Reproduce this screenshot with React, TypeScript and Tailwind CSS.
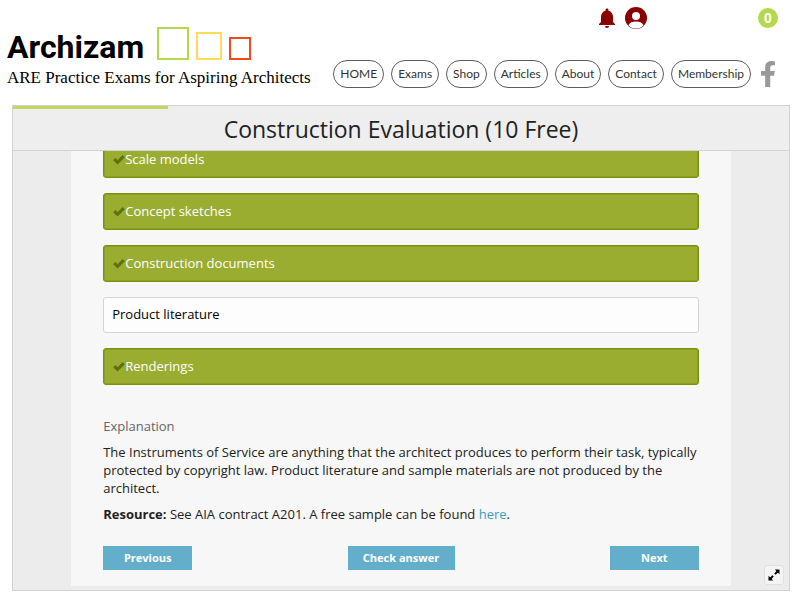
import { useState } from 'react'
import { FaFacebookF } from 'react-icons/fa'
import { MdNotifications } from 'react-icons/md'

type Option = {
  id: string
  label: string
}

const navItems = ['HOME', 'Exams', 'Shop', 'Articles', 'About', 'Contact', 'Membership']

const options: Option[] = [
  { id: 'models', label: 'Scale models' },
  { id: 'sketches', label: 'Concept sketches' },
  { id: 'documents', label: 'Construction documents' },
  { id: 'literature', label: 'Product literature' },
  { id: 'renderings', label: 'Renderings' },
]

const actionCls = 'h-6 bg-[#63afcb] text-[11px] font-bold text-white hover:bg-[#529fbb]'

function LogoSquares() {
  return (
    <svg width="94" height="34" viewBox="0 0 94 34" fill="none" strokeWidth="2" aria-hidden>
      <rect x="1" y="1" width="30" height="31" stroke="#b5d94c" />
      <rect x="40" y="6" width="24" height="26" stroke="#ffdb58" />
      <rect x="73" y="11" width="20" height="21" stroke="#ee4a1c" />
    </svg>
  )
}

function AccountIcon() {
  return (
    <svg width="22" height="22" viewBox="0 0 22 22" aria-hidden>
      <circle cx="11" cy="11" r="11" fill="#8b0000" />
      <circle cx="11" cy="9" r="4" fill="#fff" />
      <path d="M3.4 18.2C4.6 15.6 7.6 14.6 11 14.6s6.4 1 7.6 3.6a10.3 10.3 0 0 1-15.2 0z" fill="#fff" />
    </svg>
  )
}

function CheckIcon() {
  return (
    <svg width="12" height="10" viewBox="0 0 12 10" className="shrink-0" aria-hidden>
      <path d="M1.2 4.1L4.5 7.3L10.8 1.1" fill="none" stroke="#5f7208" strokeWidth="3" />
    </svg>
  )
}

function ExpandIcon() {
  return (
    <svg width="12" height="12" viewBox="0 0 12 12" aria-hidden>
      <path d="M6.8 0.5H11.5V5.2zM0.5 6.8V11.5H5.2z" fill="#000" />
      <path d="M9.5 2.5L6.9 5.1M5.1 6.9L2.5 9.5" stroke="#000" strokeWidth="2" />
    </svg>
  )
}

function OptionRow({ option, checked, onToggle }: { option: Option; checked: boolean; onToggle: () => void }) {
  return (
    <label
      className={
        checked
          ? 'flex h-[37px] cursor-pointer items-center rounded-[3px] border border-[#799209] bg-[#9aad31] px-[9px] text-white shadow-[inset_0_0_0_1px_#8a9f1d]'
          : 'flex h-9 cursor-pointer items-center rounded-[3px] border border-[#d4d4d4] bg-[#fdfdfd] px-2 text-black'
      }
    >
      <input type="checkbox" className="sr-only" checked={checked} onChange={onToggle} />
      {checked && <CheckIcon />}
      {option.label}
    </label>
  )
}

function Header() {
  return (
    <header className="flex items-start justify-between pr-[22px] pl-[7px]">
      <div className="pt-[27px] whitespace-nowrap text-black">
        <div className="flex items-start gap-[13px]">
          <span className="font-['Roboto',sans-serif] text-[32px] leading-10 font-bold">Archizam</span>
          <LogoSquares />
        </div>
        <p className="font-['Liberation_Serif',serif] text-[17px] leading-[22px]">
          ARE Practice Exams for Aspiring Architects
        </p>
      </div>
      <div className="flex flex-col gap-[30px] pt-1.5">
        <div className="flex items-center justify-end">
          <button type="button" aria-label="Notifications" className="mr-1.5 text-[#8b0000]">
            <MdNotifications size={24} />
          </button>
          <button type="button" aria-label="Account" className="mr-[111px]">
            <AccountIcon />
          </button>
          <a
            href="#cart"
            className="flex size-5 items-center justify-center rounded-full bg-[#b5d94c] font-['Liberation_Sans',sans-serif] text-[14px] font-bold text-white"
          >
            0
          </a>
        </div>
        <div className="flex items-center">
          <nav className="flex gap-[7px] font-['Lato',sans-serif] text-[12px] text-[#333]">
            {navItems.map((item) => (
              <a
                key={item}
                href={`#${item.toLowerCase()}`}
                className="flex h-7 items-center rounded-full border border-[#5c5c5c] px-1.5 whitespace-nowrap"
              >
                {item}
              </a>
            ))}
          </nav>
          <a href="#facebook" aria-label="Facebook" className="mr-[-3px] ml-1 text-[#999]">
            <FaFacebookF size={26} />
          </a>
        </div>
      </div>
    </header>
  )
}

export default function App() {
  const [selected, setSelected] = useState(['models', 'sketches', 'documents', 'renderings'])

  const toggle = (id: string) =>
    setSelected((prev) => (prev.includes(id) ? prev.filter((s) => s !== id) : [...prev, id]))

  return (
    <div className="bg-white font-['Open_Sans',sans-serif] text-[13px] text-[#222]">
      <Header />
      <main className="relative mt-4 mr-[10px] ml-3 border border-[#d2d2d2] bg-[#ececec]">
        <div className="border-b border-[#d2d2d2] bg-[#eee]">
          <div className="h-[3px] w-1/5 bg-[#c0d860]" />
          <h1 className="text-center text-[23px] leading-[41px]">Construction Evaluation (10 Free)</h1>
        </div>
        <div className="overflow-hidden pb-1">
          <section className="mx-auto w-[85%] bg-[#f7f7f7] px-8 pb-4">
            <fieldset className="-mt-2.5 flex flex-col gap-[15px]">
              {options.map((option) => (
                <OptionRow
                  key={option.id}
                  option={option}
                  checked={selected.includes(option.id)}
                  onToggle={() => toggle(option.id)}
                />
              ))}
            </fieldset>
            <h2 className="mt-8 leading-[18px] text-[#666]">Explanation</h2>
            <p className="mt-2 leading-[18px]">
              The Instruments of Service are anything that the architect produces to perform their task, typically
              protected by copyright law. Product literature and sample materials are not produced by the architect.
            </p>
            <p className="mt-2 leading-[18px]">
              <strong>Resource:</strong> See AIA contract A201. A free sample can be found{' '}
              <a href="#sample" className="text-[#3a9cba]">
                here
              </a>
              .
            </p>
            <div className="mt-[23px] flex justify-between">
              <button type="button" className={`w-[89px] ${actionCls}`}>
                Previous
              </button>
              <button type="button" className={`w-[107px] ${actionCls}`}>
                Check answer
              </button>
              <button type="button" className={`w-[89px] ${actionCls}`}>
                Next
              </button>
            </div>
          </section>
        </div>
        <button
          type="button"
          aria-label="Full screen"
          className="absolute right-[5px] bottom-[5px] flex size-5 items-center justify-center rounded-[3px] border border-[#e0e0e0] bg-[#f4f4f4]"
        >
          <ExpandIcon />
        </button>
      </main>
    </div>
  )
}
